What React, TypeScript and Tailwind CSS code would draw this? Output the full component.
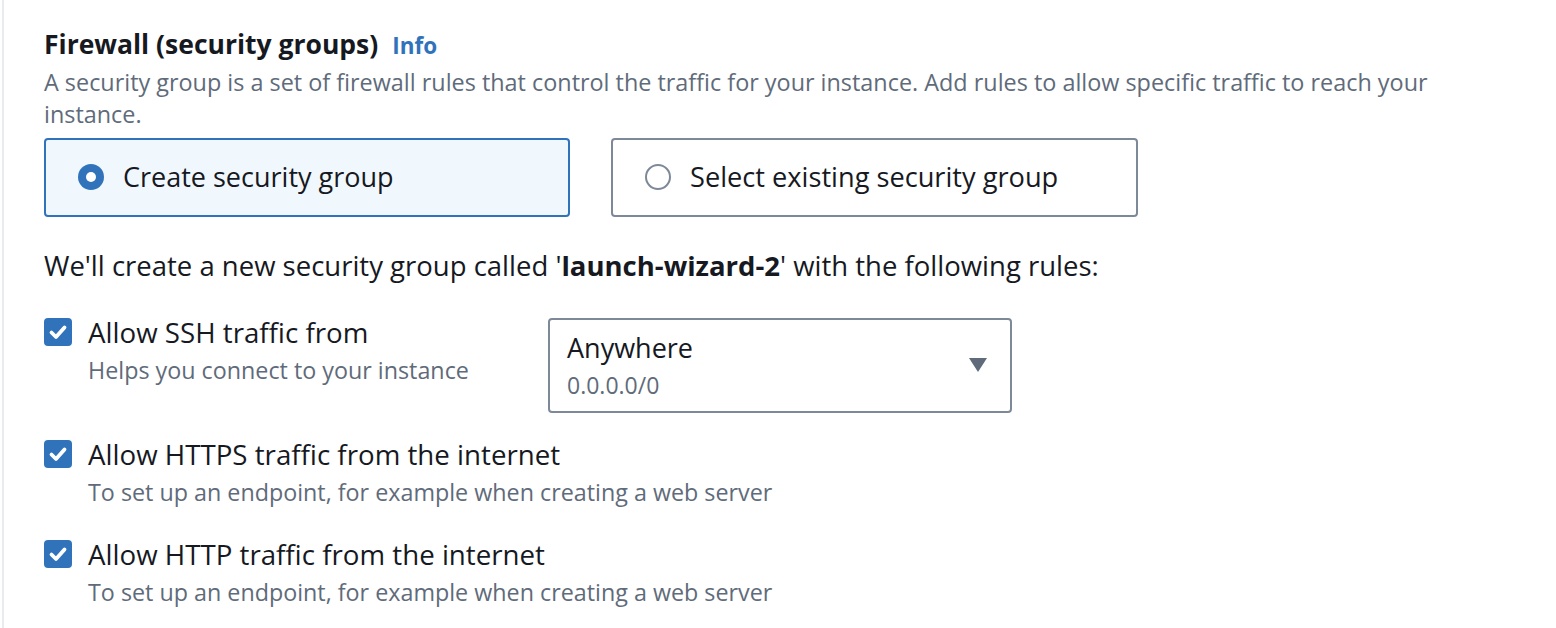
import { ReactNode } from "react";

const font = { fontFamily: '"Open Sans", "Noto Sans", Arial, sans-serif' };

function Checkbox() {
  return (
    <span className="flex h-[28px] w-[28px] shrink-0 items-center justify-center rounded-[4px] bg-[#3073bb]">
      <svg width="28" height="28" viewBox="0 0 28 28" fill="none">
        <path d="M7.5 14.5 L12 19 L20.5 9.5" stroke="white" strokeWidth="3.8" strokeLinecap="round" strokeLinejoin="round" />
      </svg>
    </span>
  );
}

function Rule({ label, hint, children }: { label: string; hint: string; children?: ReactNode }) {
  return (
    <div className="flex items-start">
      <div className="flex w-[504px] shrink-0 items-start gap-4">
        <div className="mt-[2px]">
          <Checkbox />
        </div>
        <div className="whitespace-nowrap">
          <div className="text-[27.7px] leading-[32px] text-[#16191f]">{label}</div>
          <div className="mt-[8px] text-[23.3px] leading-[28px] text-[#5f6b7a]">{hint}</div>
        </div>
      </div>
      {children}
    </div>
  );
}

export default function App() {
  return (
    <div className="min-h-[628px] bg-white" style={font}>
      <div className="ml-[2px] min-h-[628px] border-l-2 border-[#e9ebed] pl-[40px] pt-[28px]">
        <div className="flex items-baseline gap-[14px]">
          <h2 className="text-[26.5px] font-bold leading-[32px] text-[#16191f]">Firewall (security groups)</h2>
          <a className="text-[22.5px] font-bold text-[#3073bb]">Info</a>
        </div>
        <p className="mt-[3px] max-w-[1420px] text-[23.4px] leading-[32px] text-[#5f6b7a]">
          A security group is a set of firewall rules that control the traffic for your instance. Add rules to allow specific traffic to reach your instance.
        </p>

        <div className="mt-[8px] flex gap-[41px]">
          <div className="flex h-[79px] w-[526px] items-center rounded-[4px] border-2 border-[#3073bb] bg-[#f1f8fd] pl-[32px]">
            <span className="flex h-[26px] w-[26px] items-center justify-center rounded-full bg-[#3073bb]">
              <span className="h-[10px] w-[10px] rounded-full bg-white" />
            </span>
            <span className="ml-[19px] text-[27px] text-[#16191f]">Create security group</span>
          </div>
          <div className="flex h-[79px] w-[527px] items-center rounded-[4px] border-2 border-[#7d8998] bg-white pl-[32px]">
            <span className="h-[26px] w-[26px] rounded-full border-2 border-[#7d8998]" />
            <span className="ml-[19px] text-[27.2px] text-[#16191f]">Select existing security group</span>
          </div>
        </div>

        <p className="mt-[33px] text-[27.5px] leading-[32px] text-[#16191f]">
          We'll create a new security group called '<span className="font-bold">launch-wizard-2</span>' with the following rules:
        </p>

        <div className="mt-[34px] flex flex-col">
          <Rule label="Allow SSH traffic from" hint="Helps you connect to your instance">
            <div className="mt-[2px] flex h-[95px] w-[464px] items-center justify-between rounded-[4px] border-2 border-[#7d8998] pl-[17px] pr-[23px]">
              <div>
                <div className="text-[27px] leading-[32px] text-[#16191f]">Anywhere</div>
                <div className="mt-[7px] text-[23px] leading-[28px] text-[#5f6b7a]">0.0.0.0/0</div>
              </div>
              <svg width="18" height="14" viewBox="0 0 18 14">
                <path d="M0 0 H18 L9 14 Z" fill="#5f6b7a" />
              </svg>
            </div>
          </Rule>
          <div className="mt-[25px]">
            <Rule label="Allow HTTPS traffic from the internet" hint="To set up an endpoint, for example when creating a web server" />
          </div>
          <div className="mt-[32px]">
            <Rule label="Allow HTTP traffic from the internet" hint="To set up an endpoint, for example when creating a web server" />
          </div>
        </div>
      </div>
    </div>
  );
}
